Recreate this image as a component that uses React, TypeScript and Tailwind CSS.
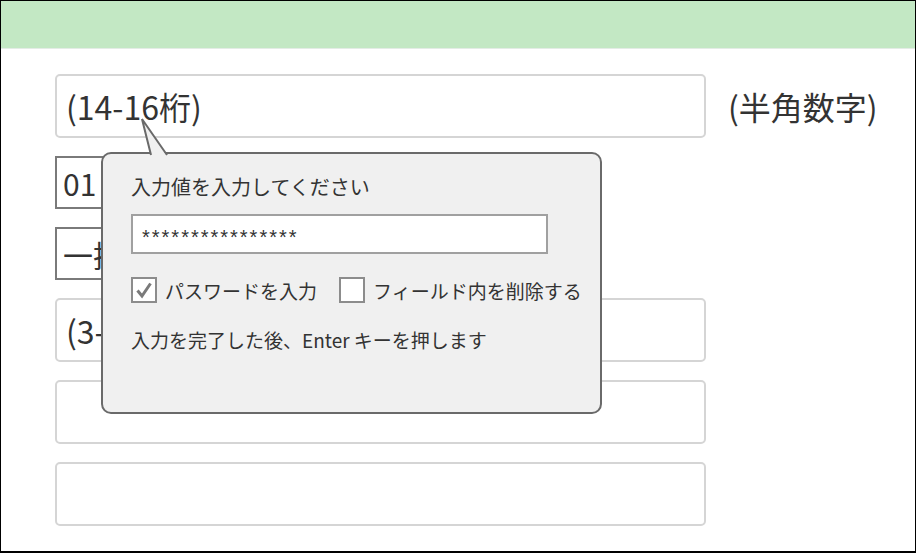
import React from 'react'

const jp = "font-['Noto_Sans_CJK_JP','Noto_Sans',sans-serif]"

const Field = ({ text }: { text?: string }) => (
  <div className="w-[651px] h-[64px] rounded-[5px] border-2 border-[#d5d5d5] bg-white flex items-center pl-[9px] text-[32px] text-[#333] leading-none">
    {text}
  </div>
)

const Box = ({ text }: { text: string }) => (
  <div className="w-[160px] h-[53px] border-2 border-[#7a7a7a] bg-white flex items-center pl-[6px] text-[30px] text-[#333] leading-none">
    {text}
  </div>
)

const Check = ({ checked, label }: { checked?: boolean; label: string }) => (
  <div className="flex items-center gap-[8px]">
    <div className="w-[26px] h-[26px] border-2 border-[#8c8c8c] bg-white flex items-center justify-center">
      {checked && (
        <svg width="20" height="20" viewBox="0 0 20 20">
          <path d="M3.5 10.5 L8 16 L16.5 3.5" fill="none" stroke="#7a7a7a" strokeWidth="3" />
        </svg>
      )}
    </div>
    <span>{label}</span>
  </div>
)

const Popup = () => (
  <div className="absolute left-[100px] top-[151px] w-[501px] h-[262px] rounded-[10px] border-2 border-[#6a6a6a] bg-[#f0f0f0] pl-[28px] pt-[21px] text-[#333] text-[19px] leading-none">
    <svg className="absolute left-[34px] top-[-37px]" width="34" height="42" viewBox="0 0 34 42">
      <polygon points="5,2 14,39 30,39" fill="#f0f0f0" />
      <polyline points="14,38 5,2 30,38" fill="none" stroke="#6a6a6a" strokeWidth="2" />
    </svg>
    <div className="text-[20px] h-[24px] flex items-center">入力値を入力してください</div>
    <div className="mt-[15px] w-[417px] h-[40px] border-2 border-[#a0a0a0] bg-white flex items-center pl-[9px] pt-[5px] text-[20px] tracking-[2px] font-['Liberation_Sans',sans-serif]">
      ****************
    </div>
    <div className="mt-[23px] flex items-center gap-[22px]">
      <Check checked label="パスワードを入力" />
      <Check label="フィールド内を削除する" />
    </div>
    <div className="mt-[27px]">入力を完了した後、Enter キーを押します</div>
  </div>
)

export default function App() {
  return (
    <div className={`relative w-[916px] h-[553px] border border-b-2 border-black bg-white overflow-hidden ${jp}`}>
      <div className="h-[48px] bg-[#c3e8c4] border-b border-[#e4ece6]" />
      <div className="pl-[54px] pt-[25px] flex flex-col gap-[18px]">
        <div className="flex items-center gap-[22px]">
          <Field text="(14-16桁)" />
          <span className="text-[32px] text-[#333] leading-none">(半角数字)</span>
        </div>
        <Box text="01" />
        <Box text="一括" />
        <Field text="(3-" />
        <Field />
        <Field />
      </div>
      <Popup />
    </div>
  )
}
